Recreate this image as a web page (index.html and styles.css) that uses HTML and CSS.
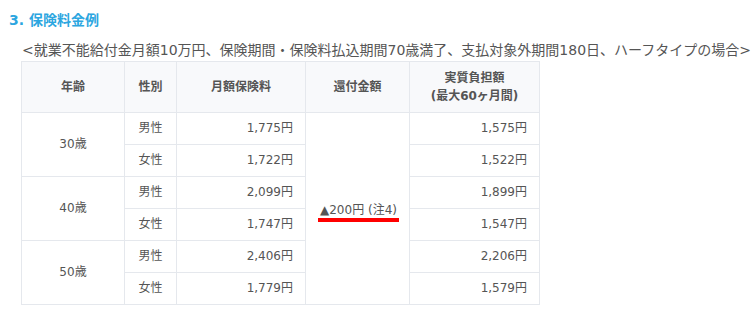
FILE: index.html
```html
<!DOCTYPE html>
<html lang="ja">
<head>
<meta charset="utf-8">
<link rel="stylesheet" href="styles.css">
</head>
<body>
<section class="section">
  <h3 class="title">3. 保険料金例</h3>
  <p class="intro">&lt;就業不能給付金月額10万円、保険期間・保険料払込期間70歳満了、支払対象外期間180日、ハーフタイプの場合&gt;</p>
  <table class="rates">
    <colgroup>
      <col class="c-age"><col class="c-sex"><col class="c-fee"><col class="c-ref"><col class="c-net">
    </colgroup>
    <thead>
      <tr>
        <th>年齢</th>
        <th>性別</th>
        <th>月額保険料</th>
        <th>還付金額</th>
        <th>実質負担額<br>(最大60ヶ月間)</th>
      </tr>
    </thead>
    <tbody>
      <tr>
        <td class="center" rowspan="2">30歳</td>
        <td class="center">男性</td>
        <td class="num">1,775円</td>
        <td class="center refund" rowspan="6"><span class="mark">▲200円 (注4)</span></td>
        <td class="num">1,575円</td>
      </tr>
      <tr>
        <td class="center">女性</td>
        <td class="num">1,722円</td>
        <td class="num">1,522円</td>
      </tr>
      <tr>
        <td class="center" rowspan="2">40歳</td>
        <td class="center">男性</td>
        <td class="num">2,099円</td>
        <td class="num">1,899円</td>
      </tr>
      <tr>
        <td class="center">女性</td>
        <td class="num">1,747円</td>
        <td class="num">1,547円</td>
      </tr>
      <tr>
        <td class="center" rowspan="2">50歳</td>
        <td class="center">男性</td>
        <td class="num">2,406円</td>
        <td class="num">2,206円</td>
      </tr>
      <tr>
        <td class="center">女性</td>
        <td class="num">1,779円</td>
        <td class="num">1,579円</td>
      </tr>
    </tbody>
  </table>
</section>
</body>
</html>
```
FILE: styles.css
```css
html, body {
  margin: 0;
  padding: 0;
  background: #fff;
}
body {
  font-family: "DejaVu Sans", "Noto Sans CJK JP", sans-serif;
  color: #555;
}
.section {
  padding: 10px 0 0 9px;
}
.title {
  margin: 0;
  font-size: 14px;
  line-height: 20px;
  font-weight: bold;
  color: #2ca6e0;
}
.intro {
  margin: 10px 0 0 13px;
  font-size: 14px;
  line-height: 20px;
  color: #555;
  white-space: nowrap;
}
.rates {
  margin: 1px 0 0 12px;
  border-collapse: collapse;
  table-layout: fixed;
  width: 518px;
  font-size: 12px;
  line-height: 19px;
}
.c-age { width: 103px; }
.c-sex { width: 52px; }
.c-fee { width: 129px; }
.c-ref { width: 104px; }
.c-net { width: 130px; }
.rates th, .rates td {
  border: 1px solid #e5e8ed;
  padding: 6px 12px;
}
.rates th {
  background: #f8f9fb;
  font-weight: bold;
  line-height: 18px;
  padding: 7px 4px;
  text-align: center;
  color: #555;
}
.center { text-align: center; }
.num { text-align: right; }
.refund { vertical-align: middle; padding: 0; }
.mark {
  display: inline-block;
  white-space: nowrap;
  padding: 0 2px;
  line-height: 16px;
  border-bottom: 4px solid #ff0000;
  margin-top: 6px;
}
```
